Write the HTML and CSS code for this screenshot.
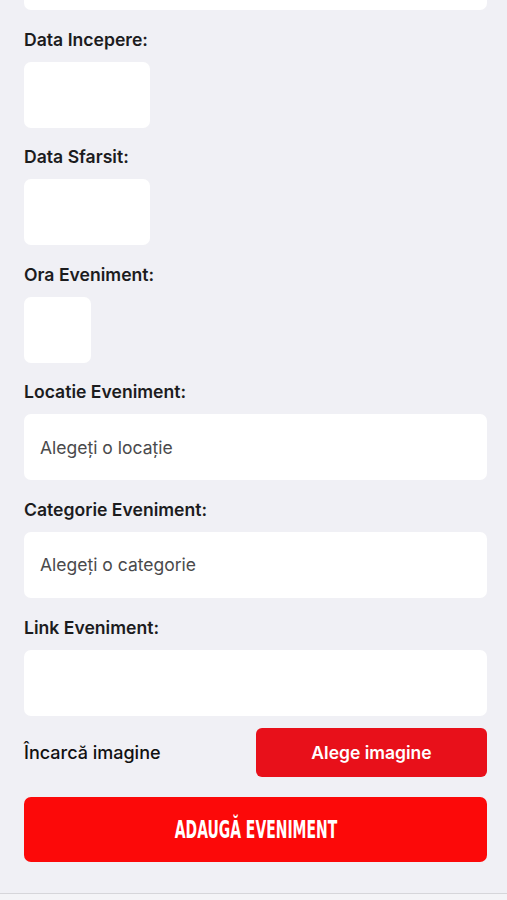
FILE: index.html
```html
<!DOCTYPE html>
<html lang="ro">
<head>
  <meta charset="UTF-8">
  <meta name="viewport" content="width=device-width, initial-scale=1.0">
  <title>Adaugă eveniment</title>
  <link rel="stylesheet" href="styles.css">
</head>
<body>
  <div class="form">
    <div class="field field-top"></div>

    <label class="label">Data Incepere:</label>
    <div class="field field-date"></div>

    <label class="label">Data Sfarsit:</label>
    <div class="field field-date"></div>

    <label class="label">Ora Eveniment:</label>
    <div class="field field-time"></div>

    <label class="label">Locatie Eveniment:</label>
    <div class="field field-select">Alegeți o locație</div>

    <label class="label">Categorie Eveniment:</label>
    <div class="field field-select">Alegeți o categorie</div>

    <label class="label">Link Eveniment:</label>
    <div class="field"></div>

    <div class="upload-row">
      <span class="upload-text">Încarcă imagine</span>
      <button class="btn-choose">Alege imagine</button>
    </div>

    <button class="btn-submit"><span>ADAUGĂ EVENIMENT</span></button>
  </div>
  <div class="bottom-bar"></div>
</body>
</html>
```

FILE: styles.css
```css
body {
  margin: 0;
  background-color: #f0f0f5;
  font-family: Inter, "Noto Sans", sans-serif;
  color: #1c1c1e;
  height: 900px;
  overflow: hidden;
}
.form {
  display: flex;
  flex-direction: column;
  padding: 0 20px 0 24px;
}
.label {
  display: block;
  font-size: 17.6px;
  font-weight: 600;
  line-height: 22px;
  margin-bottom: 11px;
}
.field {
  background-color: #ffffff;
  border-radius: 7px;
  height: 66px;
  margin-bottom: 18.6px;
  box-sizing: border-box;
}
.field-top {
  margin-top: -56px;
}
.field-date {
  width: 126px;
}
.field-time {
  width: 67px;
}
.field-select {
  display: flex;
  align-items: center;
  padding-left: 16px;
  font-size: 17.5px;
  color: #4a4a4c;
}
.upload-row {
  display: flex;
  justify-content: space-between;
  align-items: center;
  margin-top: -6px;
}
.upload-text {
  font-size: 18px;
  font-weight: 500;
  color: #111;
}
.btn-choose {
  width: 231px;
  height: 49px;
  background-color: #e8101a;
  color: #fff;
  border: none;
  border-radius: 6px;
  font-family: Inter, "Noto Sans", sans-serif;
  font-size: 17.5px;
  font-weight: 600;
}
.btn-submit {
  margin-top: 20px;
  height: 65px;
  background-color: #fc0909;
  color: #fff;
  border: none;
  border-radius: 7px;
  font-family: "Liberation Sans Narrow", "DejaVu Sans Condensed", sans-serif;
  font-size: 25px;
  font-weight: 700;
}
.btn-submit span {
  display: inline-block;
  transform: scaleX(0.62);
}
.bottom-bar {
  position: absolute;
  left: 0;
  right: 0;
  top: 893px;
  height: 7px;
  border-top: 1px solid #d6d6da;
  background-color: #f4f4f7;
}
```
